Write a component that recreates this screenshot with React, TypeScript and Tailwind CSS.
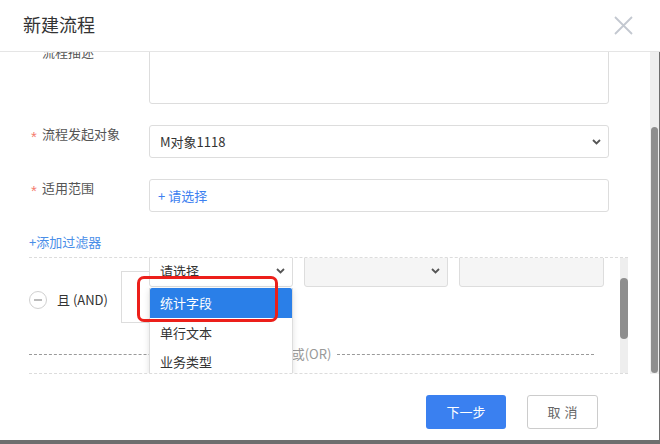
import React from "react";

const font = { fontFamily: '"Noto Sans CJK SC", "Noto Sans", sans-serif' };

function Chevron() {
  return (
    <svg width="9" height="6" viewBox="0 0 9 6" className="shrink-0">
      <polyline points="1,1 4.5,4.5 8,1" fill="none" stroke="#555" strokeWidth="1.8" />
    </svg>
  );
}

function Star() {
  return (
    <span className="w-[11px] text-[15px] leading-[20px] text-[#f47b6d] mt-[2px] font-['Liberation_Sans',sans-serif]">*</span>
  );
}

export default function App() {
  return (
    <div className="w-[660px] h-[444px] bg-[#6e6e6e] flex flex-col overflow-hidden" style={font}>
      {/* Header */}
      <div className="h-[52px] bg-white border-b border-[#e5e5e5] flex items-center justify-between pl-[23px] pr-[27px] shrink-0">
        <div className="text-[18px] text-[#333] pb-[2px]">新建流程</div>
        <svg width="19" height="19" viewBox="0 0 19 19">
          <path d="M1 1 L18 18 M18 1 L1 18" stroke="#c3c8d0" strokeWidth="1.8" />
        </svg>
      </div>

      <div className="h-[388px] bg-white border-r border-[#6e6e6e] flex flex-col shrink-0">
        {/* Scrolling body */}
        <div className="h-[322px] flex shrink-0">
          <div className="w-[650px] overflow-hidden">
            <div className="-mt-[9px] flex flex-col">
              {/* 流程描述 */}
              <div className="flex items-start pl-[31px]">
                <span className="w-[11px]" />
                <span className="w-[107px] text-[13px] leading-[20px] text-[#555] -mt-[1px]">流程描述</span>
                <div className="w-[460px] h-[61px] border border-[#ddd] rounded-[3px]" />
              </div>

              {/* 流程发起对象 */}
              <div className="flex items-start pl-[31px] mt-[21px]">
                <Star />
                <span className="w-[107px] text-[13px] leading-[20px] text-[#555] -mt-[1px]">流程发起对象</span>
                <div className="w-[460px] h-[33px] border border-[#ddd] rounded-[3px] flex items-center justify-between pl-[10px] pr-[7px]">
                  <span className="text-[13px] text-[#333]">M对象1118</span>
                  <Chevron />
                </div>
              </div>

              {/* 适用范围 */}
              <div className="flex items-start pl-[31px] mt-[21px]">
                <Star />
                <span className="w-[107px] text-[13px] leading-[20px] text-[#555] -mt-[1px]">适用范围</span>
                <div className="w-[460px] h-[33px] border border-[#ddd] rounded-[3px] flex items-center pl-[8px]">
                  <span className="text-[13px] text-[#3d7ff0]">+ 请选择</span>
                </div>
              </div>

              <div className="mt-[20px] pl-[29px] text-[13px] leading-[20px] text-[#4a8ee8]">+添加过滤器</div>

              {/* Filter box */}
              <div className="mt-[5px] ml-[29px] w-[599px] h-[117px] flex border-y border-dashed border-[#dcdcdc]">
                <div className="w-[591px] overflow-hidden">
                  <div className="-mt-[4px] flex items-center h-[86px]">
                    <div className="w-[120px] flex items-center">
                      <div className="w-[18px] h-[18px] rounded-full border border-[#d0d0d0] flex items-center justify-center mt-[6px]">
                        <div className="w-[8px] h-[1.5px] bg-[#bbb]" />
                      </div>
                      <span className="ml-[10px] w-[64px] text-[13px] text-[#333] mt-[6px]">且 (AND)</span>
                      <div className="w-[28px] h-[52px] border border-r-0 border-[#ddd]" />
                    </div>
                    <div className="self-start flex gap-[11px]">
                      <div className="relative w-[144px]">
                        <div className="h-[33px] border border-[#ddd] rounded-[3px] bg-white flex items-center justify-between pl-[10px] pr-[7px]">
                          <span className="text-[13px] text-[#333]">请选择</span>
                          <Chevron />
                        </div>
                        <div className="absolute top-[34px] left-0 w-[144px] z-10 bg-white border-x border-[#ddd] shadow-[0_2px_6px_rgba(0,0,0,0.12)] text-[13px]">
                          <div className="h-[30px] bg-[#2a7fe8] text-white flex items-center pl-[10px] rounded-t-[2px]">统计字段</div>
                          <div className="h-[29px] text-[#333] flex items-center pl-[10px]">单行文本</div>
                          <div className="h-[29px] text-[#333] flex items-center pl-[10px]">业务类型</div>
                        </div>
                        <div className="absolute left-[-12px] top-[22px] w-[141px] h-[46px] border-[3px] border-[#ec1f1a] rounded-[7px] z-20" />
                      </div>
                      <div className="w-[144px] h-[33px] border border-[#ddd] rounded-[3px] bg-[#f5f5f5] flex items-center justify-end pr-[7px]">
                        <Chevron />
                      </div>
                      <div className="w-[145px] h-[33px] border border-[#ddd] rounded-[3px] bg-[#f5f5f5]" />
                    </div>
                  </div>
                  <div className="mt-[4px] h-[20px] w-[565px] flex items-center">
                    <div className="flex-1 border-t border-dashed border-[#9a9a9a]" />
                    <span className="px-[6px] text-[13px] text-[#999]">或(OR)</span>
                    <div className="flex-1 border-t border-dashed border-[#9a9a9a]" />
                  </div>
                </div>
                <div className="w-[8px] bg-[#eeeeee] flex flex-col">
                  <div className="mt-[20px] h-[61px] w-full rounded-full bg-[#8e8e8e]" />
                </div>
              </div>
            </div>
          </div>
          {/* Body scrollbar */}
          <div className="w-[9px] bg-[#efefef] flex flex-col items-center">
            <div className="mt-[75px] h-[246px] w-[7px] rounded-full bg-[#8e8e8e]" />
          </div>
        </div>

        {/* Footer */}
        <div className="flex-1 flex justify-end items-start pt-[21px] pr-[61px] gap-[21px]">
          <button className="w-[80px] h-[34px] rounded-[3px] bg-[#3a80f0] text-white text-[13px]">下一步</button>
          <button className="w-[71px] h-[34px] rounded-[3px] border border-[#ccc] bg-white text-[#666] text-[13px] tracking-[4px] pl-[4px]">取消</button>
        </div>
      </div>
    </div>
  );
}
